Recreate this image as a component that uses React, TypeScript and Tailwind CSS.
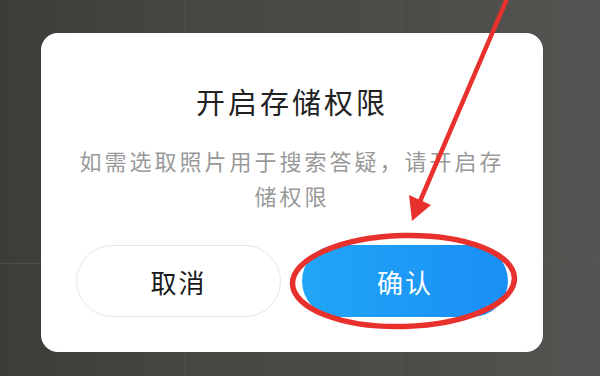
import React from 'react'

const cjk = '"Noto Sans CJK SC","Noto Sans",sans-serif'

export default function App() {
  return (
    <div
      className="relative w-[600px] h-[376px] overflow-hidden bg-[linear-gradient(90deg,#3d3c39_0%,#484744_35%,#4d4c49_70%,#555452_100%)]"
      style={{ fontFamily: cjk }}
    >
      {/* faint background grid */}
      <svg className="absolute inset-0" width="600" height="376">
        <g stroke="#5a5956" strokeWidth="1" opacity="0.6">
          <line x1="185.5" y1="0" x2="185.5" y2="376" />
          <line x1="401.5" y1="0" x2="401.5" y2="376" />
          <line x1="0" y1="263.5" x2="600" y2="263.5" />
        </g>
      </svg>

      <div className="relative pt-[33px] pl-[41px]">
        <div className="w-[502px] h-[319px] bg-white rounded-[17px] flex flex-col items-center pt-[54px] px-[35px]">
          <h1 className="text-[29px] leading-[29px] tracking-[3px] text-[#222222] font-normal">
            开启存储权限
          </h1>
          <p className="mt-[27px] text-[22px] leading-[35px] tracking-[3px] text-[#999999] text-center w-full">
            如需选取照片用于搜索答疑，请开启存储权限
          </p>
          <div className="mt-auto mb-[35px] flex gap-[21px]">
            <button className="w-[205px] h-[72px] rounded-full border border-[#e6e6e6] bg-white text-[26px] tracking-[2px] text-[#1a1a1a]">
              取消
            </button>
            <button className="w-[206px] h-[72px] rounded-full bg-[linear-gradient(90deg,#20a6f7,#1a8ef5)] text-[26px] tracking-[2px] text-white">
              确认
            </button>
          </div>
        </div>
      </div>

      {/* red annotation */}
      <svg className="absolute inset-0 pointer-events-none" width="600" height="376">
        <line x1="509" y1="-6" x2="418" y2="206" stroke="#e8312d" strokeWidth="4.5" strokeLinecap="round" />
        <polygon points="409,195 431,205 412,221" fill="#e8312d" />
        <ellipse
          cx="403.5"
          cy="281"
          rx="111"
          ry="45.5"
          fill="none"
          stroke="#e8312d"
          strokeWidth="5.5"
          transform="rotate(-1.5 403.5 281)"
        />
      </svg>
    </div>
  )
}
